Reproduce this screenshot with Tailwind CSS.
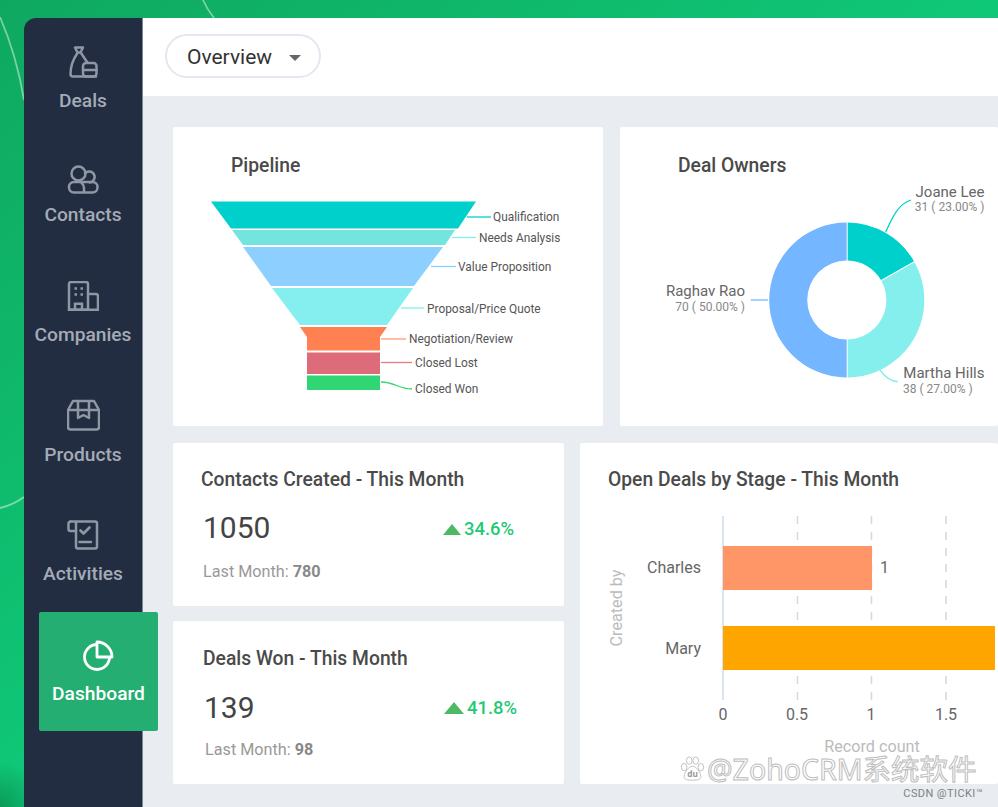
<!DOCTYPE html>
<html lang="en">

<head>
    <meta charset="UTF-8">
    <meta name="viewport" content="width=device-width, initial-scale=1.0">
    <title>CRM Dashboard</title>
    <script src="https://cdn.jsdelivr.net/npm/@tailwindcss/browser@4"></script>
</head>

<body class="bg-white">
    <div class="relative flex w-[998px] h-[807px] overflow-hidden bg-[#e9ecf0] font-['Roboto',sans-serif]">
        <div class="relative flex-1 h-full overflow-hidden bg-gradient-to-br from-[#0fa860] via-[#0fc877] to-[#0fca78]">
            <!-- background curves -->
            <div class="absolute inset-0 bg-[radial-gradient(circle_at_0_100%,#0a9a58,transparent_45px)]"></div>
            <svg class="absolute inset-0" width="995" height="807" fill="none" stroke="#ffffff" stroke-opacity="0.45" stroke-width="1.8">
                <path d="M0 17C10 40 19 70 24 100" />
                <path d="M203 0C206 7 210 13 214 18" />
                <path d="M0 508C9 506 17 502 24 497" />
            </svg>

            <div class="relative flex h-full pt-[18px] pl-6">
                <!-- Sidebar -->
                <aside class="relative w-[119px] shrink-0 rounded-tl-xl bg-[#222d42] border-r border-[#7d8698] text-[#a5abb6] text-[19.2px] font-medium leading-[24px]">
                    <div class="flex flex-col items-center pt-[27px] h-[119px]">
                        <svg width="32" height="34" viewBox="0 0 32 34" fill="none" stroke="#8f96a4" stroke-width="2.5" stroke-linejoin="round" stroke-linecap="round">
                            <path d="M8 2.500h8l-2.500 5h-3z" />
                            <path d="M10.500 8C7 13 3.500 21 3.500 29q0 2.500 2.500 2.500h23" />
                            <path d="M14 8l6 9" />
                            <rect x="16" y="18" width="13.500" height="13.500" rx="3" />
                            <path d="M16 25h13.500" />
                        </svg>
                        <span class="mt-[10px]">Deals</span>
                    </div>
                    <div class="flex flex-col items-center pt-[27px] h-[119px]">
                        <svg width="32" height="30" viewBox="0 0 32 30" fill="none" stroke="#8f96a4" stroke-width="2.5">
                            <circle cx="11.500" cy="9.500" r="7" />
                            <path d="M17.500 10a5.500 5.500 0 1 1 4.500 8.500" />
                            <rect x="2" y="18" width="28.500" height="10.500" rx="5" />
                            <path d="M17 28v-4q0-3-3-6" />
                        </svg>
                        <span class="mt-[9px]">Contacts</span>
                    </div>
                    <div class="flex flex-col items-center pt-[25px] h-[119px]">
                        <svg width="32" height="30" viewBox="0 0 32 30" fill="none" stroke="#8f96a4" stroke-width="2.5">
                            <path d="M2 28.800V3a2 2 0 0 1 2-2h15a2 2 0 0 1 2 2v25.800z" />
                            <path d="M21 13h8a2 2 0 0 1 2 2v13.800H1" />
                            <path d="M8 28.800v-6h7v6" />
                            <path d="M7.500 7.500h2.500M13.500 7.500h2.500M7.500 13.500h2.500M13.500 13.500h2.500" stroke-width="2.400" />
                        </svg>
                        <span class="mt-[12px]">Companies</span>
                    </div>
                    <div class="flex flex-col items-center pt-[24px] h-[119px]">
                        <svg width="33" height="32" viewBox="0 0 33 32" fill="none" stroke="#8f96a4" stroke-width="2.500" stroke-linejoin="round">
                            <path d="M6 2h21l5 9v17a2.500 2.500 0 0 1-2.500 2.500h-26A2.500 2.500 0 0 1 1 28V11z" />
                            <path d="M1 11h31" />
                            <path d="M11 2v17l5.500-3 5.500 3V2" />
                        </svg>
                        <span class="mt-[12px]">Products</span>
                    </div>
                    <div class="flex flex-col items-center pt-[25px] h-[119px]">
                        <svg width="32" height="32" viewBox="0 0 32 32" fill="none" stroke="#8f96a4" stroke-width="2.500" stroke-linejoin="round" stroke-linecap="round">
                            <path d="M3.500 2.500H28a2 2 0 0 1 2 2v23a2 2 0 0 1-2 2H11a2 2 0 0 1-2-2V4.500a2 2 0 0 0-2-2" />
                            <path d="M3.500 2.500a2 2 0 0 0-2 2V10a2 2 0 0 0 2 2H9" />
                            <path d="M13.500 11.500l3 3 6-6" stroke-width="2.700" />
                            <path d="M12.500 23h11.500" />
                        </svg>
                        <span class="mt-[11px]">Activities</span>
                    </div>
                    <div class="absolute left-[15px] top-[594px] z-10 flex h-[119px] w-[119px] flex-col items-center rounded-[2px] bg-[#25ae72] pt-[27px] text-white font-medium">
                        <svg width="32" height="32" viewBox="0 0 32 32" fill="none" stroke="#ffffff" stroke-width="2.800" stroke-linejoin="round">
                            <path d="M14 5.500A12.500 12.500 0 1 0 26.500 18" />
                            <path d="M14 3a15 15 0 0 1 15 15H14z" />
                        </svg>
                        <span class="mt-[11px]">Dashboard</span>
                    </div>
                </aside>

                <main class="flex-1 flex flex-col bg-[#e9ecf0]">
                    <!-- Top bar -->
                    <div class="h-[78px] shrink-0 bg-white pl-[22px] pt-[16px]">
                        <div class="flex h-[44px] w-[156px] items-center rounded-full border-2 border-[#e3e8ef] pl-[20px] pt-[3px] text-[21px] text-[#333]">
                            Overview
                            <span class="ml-[17px] h-0 w-0 border-x-[6px] border-t-[6px] border-x-transparent border-t-[#666]"></span>
                        </div>
                    </div>

                    <div class="pl-[30px] pt-[31px]">
                        <div class="flex gap-[17px]">
                            <!-- Pipeline -->
                            <section class="w-[430px] h-[299px] shrink-0 bg-white rounded-[2px]">
                                <h2 class="pl-[58px] pt-[27px] text-[19.3px] leading-[24px] font-medium text-[#4a4a4a] h-[63px]">Pipeline</h2>
                                <svg width="430" height="236" viewBox="173 190 430 236" font-size="11.9" fill="#555">
                                    <polygon points="211,201.500 476,201.500 458,228.500 231,228.500" fill="#00d0cc" />
                                    <polygon points="232,230 455,230 445,245 243,245" fill="#74e4de" />
                                    <polygon points="243,247 443,247 414,286 271,286" fill="#8dcffe" />
                                    <polygon points="272,288 413,288 387,325 300,325" fill="#84efee" />
                                    <polygon points="300,327 387,327 380,337 380,350.500 307,350.500 307,337" fill="#ff8050" />
                                    <rect x="307" y="352.500" width="73" height="21.500" fill="#de6b79" />
                                    <rect x="307" y="375.500" width="73" height="14.500" fill="#2fd673" />

                                    <g fill="none" stroke-width="1.300">
                                        <path d="M467 217H491" stroke="#00d0cc" />
                                        <path d="M452 237.500H476" stroke="#84efee" />
                                        <path d="M431 266.500H456" stroke="#8dcffe" />
                                        <path d="M401 308H424" stroke="#84efee" />
                                        <path d="M381 339H406" stroke="#ff9a74" />
                                        <path d="M381 362.500H412" stroke="#e57a88" />
                                        <path d="M381 382C395 382 398 389 412 389" stroke="#2fd673" />
                                    </g>
                                    <text x="493" y="221">Qualification</text>
                                    <text x="479" y="242">Needs Analysis</text>
                                    <text x="458" y="271">Value Proposition</text>
                                    <text x="427" y="313">Proposal/Price Quote</text>
                                    <text x="409" y="343">Negotiation/Review</text>
                                    <text x="415" y="367">Closed Lost</text>
                                    <text x="415" y="393">Closed Won</text>
                                </svg>
                            </section>

                            <!-- Deal Owners -->
                            <section class="flex-1 h-[299px] bg-white rounded-[2px]">
                                <h2 class="pl-[58px] pt-[27px] text-[19.3px] leading-[24px] font-medium text-[#4a4a4a] h-[51px]">Deal Owners</h2>
                                <svg width="375" height="248" viewBox="620 178 375 248">
                                    <path d="M846.700 222.500A77.500 77.500 0 0 0 846.700 377.500V339.500A39.500 39.500 0 0 1 846.700 260.500Z" fill="#74b6ff" />
                                    <path d="M847.700 222.500A77.500 77.500 0 0 1 914 261.300L881 280A39.500 39.500 0 0 0 847.700 260.500Z" fill="#00d0cb" />
                                    <path d="M914.500 262.300A77.500 77.500 0 0 1 847.700 377.500V339.500A39.500 39.500 0 0 0 881.500 281Z" fill="#84efec" />
                                    <g fill="none" stroke-width="1.300">
                                        <path d="M885.700 232C892 218 898 204 911 200" stroke="#00d0cb" />
                                        <path d="M880 370C885 377 891 381.500 898 381.700" stroke="#84efec" />
                                        <path d="M750.700 300H768" stroke="#74b6ff" />
                                    </g>
                                    <text x="984.500" y="197" text-anchor="end" font-size="15" fill="#666">Joane Lee</text>
                                    <text x="984.500" y="211" text-anchor="end" font-size="12" fill="#888">31 ( 23.00% )</text>
                                    <text x="984.500" y="378" text-anchor="end" font-size="15" fill="#666">Martha Hills</text>
                                    <text x="903" y="393" font-size="12" fill="#888">38 ( 27.00% )</text>
                                    <text x="745" y="296" text-anchor="end" font-size="15" fill="#666">Raghav Rao</text>
                                    <text x="745" y="311" text-anchor="end" font-size="12" fill="#888">70 ( 50.00% )</text>
                                </svg>
                            </section>
                        </div>

                        <div class="mt-[17px] flex gap-[16px]">
                            <div class="flex w-[391px] shrink-0 flex-col gap-[15px]">
                                <!-- Contacts Created -->
                                <section class="h-[163px] bg-white rounded-[2px] pl-[28px] pt-[25px]">
                                    <h2 class="text-[19.3px] leading-[24px] font-medium text-[#4a4a4a]">Contacts Created - This Month</h2>
                                    <div class="mt-[17px] flex h-[36px] items-center pl-[2px]">
                                        <span class="w-[240px] text-[30px] text-[#444]">1050</span>
                                        <span class="mt-[4px] h-0 w-0 border-x-[9.5px] border-b-[11px] border-x-transparent border-b-[#4eb964]"></span>
                                        <span class="ml-[3px] mt-[3px] text-[18.4px] font-medium text-[#1fc976]">34.6%</span>
                                    </div>
                                    <p class="mt-[17px] pl-[2px] text-[16.2px] leading-[20px] text-[#999]">Last Month: <b class="font-bold text-[#888]">780</b></p>
                                </section>
                                <!-- Deals Won -->
                                <section class="h-[163px] bg-white rounded-[2px] pl-[30px] pt-[26px]">
                                    <h2 class="text-[19.3px] leading-[24px] font-medium text-[#4a4a4a]">Deals Won - This Month</h2>
                                    <div class="mt-[18px] flex h-[36px] items-center pl-[1px]">
                                        <span class="w-[240px] text-[30px] text-[#444]">139</span>
                                        <span class="mt-[2px] h-0 w-0 border-x-[10px] border-b-[12px] border-x-transparent border-b-[#4eb964]"></span>
                                        <span class="ml-[3px] mt-[2px] text-[18.4px] font-medium text-[#1fc976]">41.8%</span>
                                    </div>
                                    <p class="mt-[15px] pl-[2px] text-[16.2px] leading-[20px] text-[#999]">Last Month: <b class="font-bold text-[#888]">98</b></p>
                                </section>
                            </div>

                            <!-- Open Deals by Stage -->
                            <section class="flex-1 h-[341px] bg-white rounded-[2px] overflow-hidden">
                                <h2 class="pl-[28px] pt-[25px] text-[19.3px] leading-[24px] font-medium text-[#4a4a4a] h-[67px]">Open Deals by Stage - This Month</h2>
                                <svg width="415" height="274" viewBox="580 510 415 274">
                                    <g stroke="#d5d8dd" stroke-width="1.500" stroke-dasharray="8 8">
                                        <path d="M797.500 516V700" />
                                        <path d="M871.500 516V700" />
                                        <path d="M946 516V700" />
                                    </g>
                                    <path d="M723 516V700" stroke="#cfd9ee" stroke-width="1.500" />
                                    <rect x="723" y="546" width="149" height="44" fill="#ff9668" />
                                    <rect x="723" y="626" width="272" height="44" fill="#ffa500" />
                                    <g font-size="16" fill="#666">
                                        <text x="701" y="572.500" text-anchor="end">Charles</text>
                                        <text x="701" y="653.500" text-anchor="end">Mary</text>
                                        <text x="880" y="572.500">1</text>
                                        <text x="723" y="719.500" text-anchor="middle">0</text>
                                        <text x="797" y="719.500" text-anchor="middle">0.5</text>
                                        <text x="871" y="719.500" text-anchor="middle">1</text>
                                        <text x="946" y="719.500" text-anchor="middle">1.5</text>
                                    </g>
                                    <text x="872" y="752" text-anchor="middle" font-size="16.200" fill="#bbb">Record count</text>
                                    <text transform="translate(622 608) rotate(-90)" text-anchor="middle" font-size="16.200" fill="#bbb">Created by</text>
                                </svg>
                            </section>
                        </div>
                    </div>
                </main>
            </div>
        </div>

        <!-- watermark -->
        <div class="absolute left-[680px] top-[756px] flex items-center gap-[2px] text-[28.5px] leading-[26px] text-white/90 [-webkit-text-stroke:1px_#bdbdbd] font-['Noto_Sans','Noto_Sans_CJK_SC',sans-serif]">
            <svg width="25" height="26" viewBox="0 0 25 28" fill="#ffffff" stroke="#bdbdbd" stroke-width="1">
                <ellipse cx="3.500" cy="12" rx="3" ry="4" />
                <ellipse cx="9" cy="5" rx="3" ry="4" />
                <ellipse cx="16" cy="5" rx="3" ry="4" />
                <ellipse cx="21.500" cy="12" rx="3" ry="4" />
                <path d="M12.500 11c4 0 9 7 9 11s-4 4-9 4-9 0-9-4 5-11 9-11z" />
                <text x="12.500" y="23" text-anchor="middle" font-size="9" fill="#999" stroke="none" font-weight="700">du</text>
            </svg>
            <span>@ZohoCRM系统软件</span>
        </div>
        <p class="absolute right-[15px] top-[787px] text-[11px] leading-[14px] tracking-[0.4px] text-[#808080]">CSDN @TICKI™</p>
    </div>
</body>

</html>
